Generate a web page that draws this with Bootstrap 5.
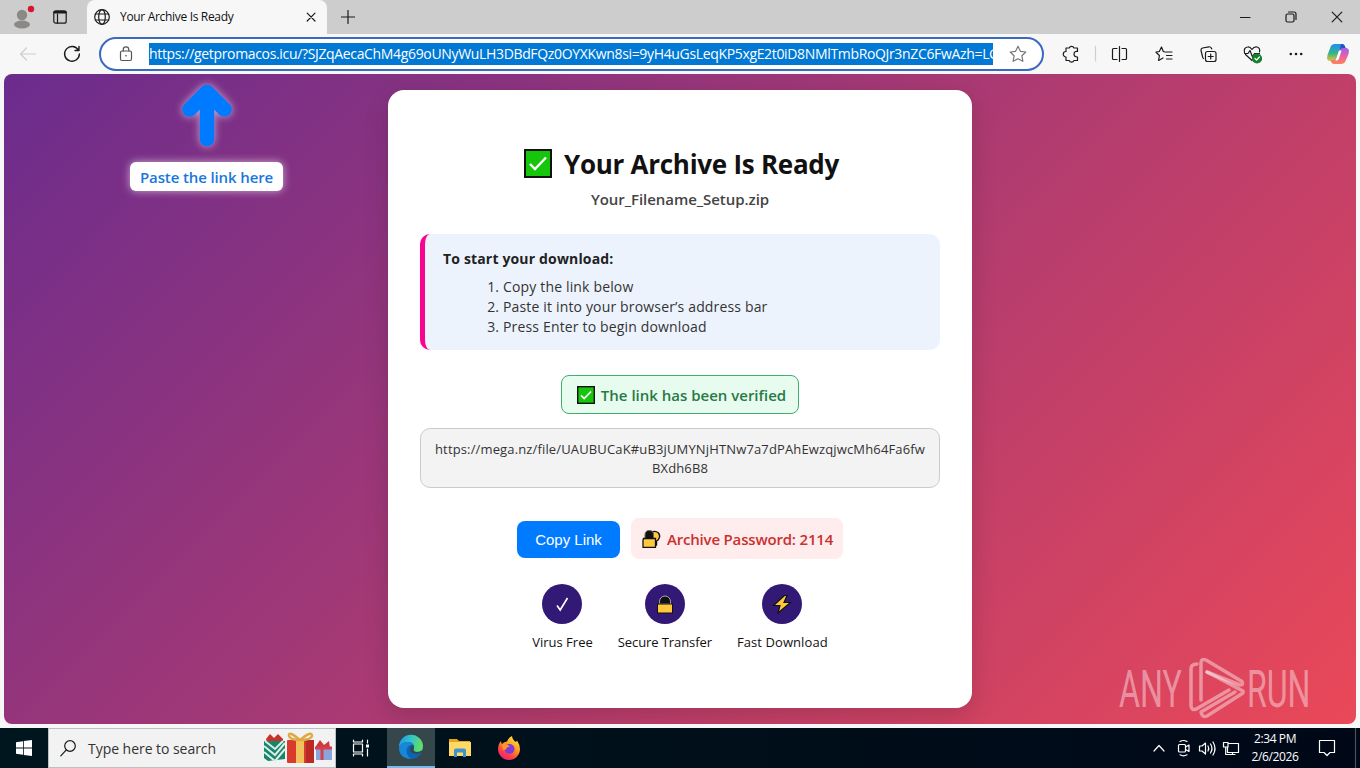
<!DOCTYPE html>
<html lang="en">
<head>
    <meta charset="UTF-8">
    <meta name="viewport" content="width=device-width, initial-scale=1.0">
    <title>Your Archive Is Ready</title>
    <link href="https://cdn.jsdelivr.net/npm/bootstrap@5.3.2/dist/css/bootstrap.min.css" rel="stylesheet">
    <style>
        body {
            width: 1360px;
            height: 768px;
            overflow: hidden;
            background: #f7f7f7;
            color: #111;
            font-family: "Open Sans", "Noto Sans", sans-serif;
        }
        svg { display: block; flex: none; }
        .ic { fill: none; stroke: #1b1b1b; stroke-width: 1.2; stroke-linecap: round; stroke-linejoin: round; }

        /* browser window */
        .tab-strip { height: 34px; background: #cdcdcd; }
        .strip-left { width: 87px; padding-left: 11px; gap: 18px; }
        .page-tab { width: 240px; background: #f7f7f7; border-radius: 8px 8px 0 0; padding: 0 9px 0 7px; }
        .tab-title { font-size: 12px; margin-left: 10px; letter-spacing: -.32px; }
        .new-tab { margin-left: 14px; }
        .win-buttons { gap: 34px; padding-right: 17px; }
        .tool-row { height: 40px; background: #f7f7f7; }
        .address { width: 945px; height: 34px; margin-left: 18px; border: 2px solid #3a69c0; border-radius: 17px; background: #fff; padding: 0 15px 0 18px; }
        .address-url { width: 844px; height: 22px; margin-left: 16px; overflow: hidden; white-space: nowrap; background: #0078d4; color: #fff; font-size: 14px; line-height: 22px; letter-spacing: -.34px; }
        .page-view { height: 650px; margin: 0 4px 4px; border-radius: 8px; overflow: hidden; background: linear-gradient(135deg, #6b2c8d, #ea4858); }

        /* hint over the page */
        .hint { left: 126px; top: 9px; width: 153px; }
        .hint svg { filter: drop-shadow(0 0 4px rgba(255,255,255,.6)); }
        .hint-label { height: 29px; width: 153px; margin-top: 15px; background: #fff; color: #1877dd; border-radius: 6px; font-size: 15px; font-weight: 600; line-height: 30px; letter-spacing: -.12px; box-shadow: 0 0 8px rgba(255,255,255,.6); }

        /* archive card */
        .ready { width: 584px; height: 618px; margin-top: 16px; padding: 52px 32px 0; border-radius: 16px; background: #fff; box-shadow: 0 8px 24px rgba(0,0,0,.15); }
        .ready-title { height: 43px; padding-left: 3px; font-size: 26px; font-weight: 700; line-height: 42px; letter-spacing: -.27px; gap: 12px; }
        .file-name { height: 24px; margin-top: 2px; font-size: 15px; font-weight: 600; line-height: 24px; letter-spacing: -.06px; color: #444; }
        .steps { height: 116px; margin-top: 23px; padding: 14px 18px; border-left: 5px solid #fb0391; border-radius: 10px; background: #edf3fd; font-size: 14px; line-height: 20px; letter-spacing: .16px; color: #333; }
        .steps strong { display: block; line-height: 22px; color: #222; }
        .steps ol { margin: 7px 0 0; padding-left: 60px; }
        .verified { width: 238px; height: 39px; margin: 25px auto 0; padding: 1px 0 0 3px; border: 1px solid #3fae6e; border-radius: 8px; background: #e8fbef; color: #267a45; font-size: 15px; font-weight: 600; gap: 6px; }
        .link-box { height: 60px; margin-top: 14px; padding: 11px 12px; border: 1px solid #ccc; border-radius: 10px; background: #f3f3f3; color: #333; font-size: 13px; line-height: 19px; letter-spacing: .143px; }
        .copy-btn { width: 103px; height: 37px; padding: 0; margin-top: 1px; border: 0; border-radius: 8px; background: #007bff; color: #fff; font: 15px "Liberation Sans", sans-serif; }
        .pass { width: 212px; height: 41px; padding-top: 1px; border-radius: 8px; background: #ffecec; color: #c9302f; font-size: 15px; font-weight: 600; letter-spacing: -.18px; gap: 6px; }
        .actions { margin-top: 30px; gap: 11px; }
        .perks { margin-top: 25px; gap: 25px; font-size: 13px; line-height: 20px; color: #111; }
        .disc { width: 40px; height: 40px; border-radius: 50%; background: #321975; margin-bottom: 8px; }
        .perk-tight { letter-spacing: -.09px; }
        .perk-wide { letter-spacing: .09px; }
        .watermark { left: 1112px; top: 582px; }

        /* taskbar */
        .taskbar { height: 40px; background: linear-gradient(90deg, #00161f, #000e19 60%, #000818); color: #fff; }
        .start { width: 48px; }
        .search { width: 288px; background: #f2f2f2; border: 1px solid #b9c1c3; color: #333; padding: 0 2px 0 11px; }
        .search-text { margin-left: 12px; font-size: 14px; letter-spacing: -.04px; }
        .task-app { width: 49px; }
        .task-view { width: 51px; padding-right: 2px; }
        .task-app.current { width: 48px; background: #36474c; border-bottom: 2px solid #76b9ed; }
        .clock { width: 66px; font-size: 12px; line-height: 18px; letter-spacing: -.39px; }
        .tray .ic { stroke: #fff; }
    </style>
</head>
<body>

<div class="tab-strip d-flex">
    <div class="strip-left d-flex align-items-center">
        <svg width="24" height="24" viewBox="0 0 24 24"><circle cx="11" cy="10" r="5.2" fill="#8c8885"/><ellipse cx="11" cy="19.5" rx="8" ry="4" fill="#8c8885"/><circle cx="20" cy="4" r="3.2" fill="#d8152c"/></svg>
        <svg class="ic" width="14" height="14" viewBox="0 0 14 14"><rect x=".8" y=".8" width="12.4" height="12.4" rx="2"/><path d="M1.5 2.3H12.5" stroke-width="2.4"/><path d="M4.5 4V13"/></svg>
    </div>
    <div class="page-tab d-flex align-items-center">
        <svg class="ic" width="16" height="16" viewBox="0 0 16 16"><circle cx="8" cy="8" r="7.3"/><ellipse cx="8" cy="8" rx="3.3" ry="7.3"/><path d="M1.4 5H14.6M1.4 11H14.6"/></svg>
        <span class="tab-title">Your Archive Is Ready</span>
        <svg class="ic ms-auto" width="14" height="14" viewBox="0 0 14 14"><path d="M3.2 3.2L11 11M11 3.2L3.2 11"/></svg>
    </div>
    <svg class="ic new-tab align-self-center" width="14" height="14" viewBox="0 0 14 14"><path d="M7 .5V13.5M.5 7H13.5"/></svg>
    <div class="win-buttons d-flex align-items-center ms-auto">
        <svg class="ic" width="11" height="12" viewBox="0 0 11 12"><path d="M.5 6.5H10"/></svg>
        <svg class="ic" width="12" height="12" viewBox="0 0 12 12"><rect x="1" y="3" width="8" height="8" rx="1.5"/><path d="M3.5 1H9Q11 1 11 3V8.5"/></svg>
        <svg class="ic" width="12" height="12" viewBox="0 0 12 12"><path d="M1.2 1.2L10.8 10.8M10.8 1.2L1.2 10.8"/></svg>
    </div>
</div>

<div class="tool-row d-flex align-items-center">
    <svg class="ic" width="81" height="20" viewBox="0 0 81 20"><path d="M35.5 10H20.5M26.5 4L20.5 10L26.5 16" stroke="#cecece"/><path d="M78.6 6.5A7.4 7.4 0 1 0 79.4 10M79 2.5V6.5H75" stroke-width="1.4"/></svg>
    <div class="address d-flex align-items-center">
        <svg class="ic" width="14" height="16" viewBox="0 0 14 16"><g stroke="#555"><rect x="1.5" y="5" width="11" height="9.5" rx="1.5"/><path d="M4.2 5V3.7A2.8 2.8 0 0 1 9.800 3.700V5"/></g><circle cx="7" cy="9.8" r=".8" fill="#444" stroke="none"/></svg>
        <div class="address-url">https://getpromacos.icu/?SJZqAecaChM4g69oUNyWuLH3DBdFQz0OYXKwn8si=9yH4uGsLeqKP5xgE2t0iD8NMlTmbRoQJr3nZC6FwAzh=LG</div>
        <svg class="ic ms-auto" width="18" height="18" viewBox="0 0 18 18"><path stroke="#777" d="M9 1.3L11.4 6.3L16.8 7L12.9 10.8L13.9 16.3L9 13.7L4.1 16.3L5.1 10.8L1.2 7L6.6 6.3Z"/></svg>
    </div>
    <svg class="ic" width="316" height="28" viewBox="1044 40 316 28">
        <path d="M1066 48H1069.2A2.6 2.6 0 0 1 1074 48H1077.5V51.5Q1074 51 1074 54T1077.5 57V60.5H1074A2.6 2.6 0 0 1 1069.2 60.5H1066V57A2.7 2.7 0 0 1 1066 51.5Z"/>
        <path d="M1095.5 46V61" stroke="#cfcfcf"/>
        <path d="M1117 48.5H1113.5Q1112.5 48.5 1112.5 49.5V58.5Q1112.5 59.5 1113.5 59.5H1117M1119.5 46.5V61.5M1122 48.5H1125.5Q1126.5 48.5 1126.5 49.5V58.5Q1126.5 59.5 1125.5 59.5H1122"/>
        <path d="M1165 52L1163.3 51.5L1161.5 47L1159.3 51.5L1156 52.2L1159.4 55.5L1158.6 60.5L1163 58M1166 52H1172M1166.500 55.5H1172M1166.500 59H1172"/>
        <rect x="1205.5" y="51.5" width="10.5" height="10" rx="2"/><path d="M1210.7 54V59M1208.2 56.5H1213.2M1203.5 58.5Q1202.7 58 1202.5 56.5L1201 50.5Q1200.8 48.5 1202.5 48L1209 46.8Q1211 46.5 1211.8 49"/>
        <path d="M1252 60.5L1245.5 54.5M1244.5 52.5Q1243.5 47.5 1247.5 47Q1250 46.5 1252 49.5Q1254 46.5 1257 47Q1260.5 48 1259.5 52M1244.5 53.5H1248L1250 50.5L1252.5 57L1254.5 53.5H1259.5"/>
        <circle cx="1257" cy="58.5" r="4.5" fill="#12802c" stroke="#12802c"/><path d="M1255 58.5L1256.6 60L1259.4 57" stroke="#fff"/>
        <g fill="#1b1b1b" stroke="none"><circle cx="1290.8" cy="54" r="1.3"/><circle cx="1296" cy="54" r="1.3"/><circle cx="1301.2" cy="54" r="1.3"/></g>
        <defs>
            <linearGradient id="cpA" x1="0" y1="0" x2="0" y2="1"><stop offset="0" stop-color="#1f8df0"/><stop offset=".55" stop-color="#35b58d"/><stop offset="1" stop-color="#e9c52e"/></linearGradient>
            <linearGradient id="cpB" x1="0" y1="0" x2="0" y2="1"><stop offset="0" stop-color="#9a61ef"/><stop offset=".55" stop-color="#ef5f9e"/><stop offset="1" stop-color="#fb8658"/></linearGradient>
        </defs>
        <g stroke="none">
            <path d="M1335 44H1342Q1344.5 44 1345.5 48L1346 50H1343Q1340.5 50 1339.5 53L1337.5 58.5Q1336.8 61 1334.5 61H1330Q1326 61 1327.5 55L1330.5 47Q1331.5 44 1335 44Z" fill="url(#cpA)"/>
            <path d="M1341 64H1334Q1331.5 64 1330.5 60H1334Q1336 60 1337 57L1339 50.5Q1340 48 1342 48H1346Q1350 48 1348.5 54L1345.5 61Q1344.5 64 1341 64Z" fill="url(#cpB)"/>
            <path d="M1339.5 51L1341 44H1342Q1344.500 44 1345.5 48H1342.5Q1340.5 48 1339.5 51Z" fill="#2453c9"/>
            <path d="M1336.3 58.5L1339 50.5H1341.5L1339 58.5Q1338.4 60 1337 60.500H1335Q1336 60 1336.3 58.5Z" fill="#fff"/>
        </g>
    </svg>
</div>

<main class="page-view position-relative d-flex justify-content-center align-items-start">
    <div class="hint position-absolute text-center">
        <svg class="mx-auto" width="56" height="64" viewBox="0 0 56 64"><path d="M28 56V14M10.500 26.500L28 9L45.500 26.500M24 18H32" fill="none" stroke="#007bff" stroke-width="14.500" stroke-linecap="round" stroke-linejoin="round"/></svg>
        <div class="hint-label">Paste the link here</div>
    </div>

    <div class="ready">
        <div class="ready-title d-flex justify-content-center align-items-center">
            <svg width="28" height="29" viewBox="0 0 28 29"><rect x="1" y="1" width="26" height="27" fill="#16c60c" stroke="#111" stroke-width="2"/><path d="M6 15L11 20L22 8.5" fill="none" stroke="#fff" stroke-width="2.400"/></svg>
            <span>Your Archive Is Ready</span>
        </div>
        <div class="file-name text-center">Your_Filename_Setup.zip</div>
        <div class="steps">
            <strong>To start your download:</strong>
            <ol>
                <li>Copy the link below</li>
                <li>Paste it into your browser’s address bar</li>
                <li>Press Enter to begin download</li>
            </ol>
        </div>
        <div class="verified d-flex justify-content-center align-items-center">
            <svg width="18" height="18" viewBox="0 0 18 18"><rect x=".7" y=".7" width="16.6" height="16.6" fill="#16c60c" stroke="#111" stroke-width="1.4"/><path d="M4 9.300L7.200 12.500L14 5.500" fill="none" stroke="#fff" stroke-width="1.7"/></svg>
            <span>The link has been verified</span>
        </div>
        <div class="link-box text-center">https://mega.nz/file/UAUBUCaK#uB3jUMYNjHTNw7a7dPAhEwzqjwcMh64Fa6fw<br>BXdh6B8</div>
        <div class="actions d-flex justify-content-center align-items-center">
            <button class="btn copy-btn" type="button">Copy Link</button>
            <div class="pass d-flex justify-content-center align-items-center">
                <svg width="20" height="20" viewBox="0 0 20 20"><path d="M10 3.500Q14 1 17.500 4Q20 7.500 17 11L15.500 12V16H10Z" fill="#ffc83d" stroke="#111" stroke-width="1.4"/><path d="M4 9.500V6Q4 1.500 8.300 1.500T12.500 6V9.500Z" fill="#111" stroke="#666"/><path d="M2.500 9.500H14.500V18.300H2V11Z" fill="#ffc83d" stroke="#111" stroke-width="1.300"/></svg>
                <span>Archive Password: 2114</span>
            </div>
        </div>
        <div class="perks d-flex justify-content-center">
            <div class="d-flex flex-column align-items-center">
                <div class="disc d-flex justify-content-center align-items-center"><svg width="16" height="18" viewBox="0 0 16 18"><path d="M3 10.500L6.200 15L13.500 3" fill="none" stroke="#fff" stroke-width="1.700"/></svg></div>
                <span>Virus Free</span>
            </div>
            <div class="d-flex flex-column align-items-center">
                <div class="disc d-flex justify-content-center align-items-center"><svg width="20" height="20" viewBox="0 0 20 20"><path d="M4.500 10V7.500A5.500 5.500 0 0 1 15.500 7.500V10Z" fill="#111" stroke="#aaa"/><rect x="2.500" y="10" width="15" height="9" fill="#ffc83d" stroke="#111"/></svg></div>
                <span class="perk-tight">Secure Transfer</span>
            </div>
            <div class="d-flex flex-column align-items-center">
                <div class="disc d-flex justify-content-center align-items-center"><svg width="20" height="20" viewBox="0 0 20 20"><path d="M12.500 1.500L1.500 11.500H8L6 19L18.500 8.500H12L15 1.500Z" fill="#ffc83d" stroke="#111" stroke-width="1.200"/></svg></div>
                <span class="perk-wide">Fast Download</span>
            </div>
        </div>
    </div>

    <svg class="watermark position-absolute" width="204" height="66" viewBox="0 0 204 66">
        <g fill="#fff" fill-opacity=".42" font-family="Roboto, sans-serif" font-size="51" font-weight="400">
            <text transform="translate(3 51) scale(.63 1)">ANY</text>
            <text transform="translate(131 51) scale(.63 1)">RUN</text>
        </g>
        <g fill="none" stroke="#fff" stroke-opacity=".42" stroke-width="3.500" stroke-linejoin="round" stroke-linecap="round">
            <path d="M85 44V7Q85 2 90 4L126 25.500Q128 29 124 29L91 16"/>
            <path d="M81 8Q75 8 75 13V50Q76 56 82 52L113 34"/>
            <path d="M91 16L127 35V37L91 60Q86 62 85 56L119 36"/>
        </g>
    </svg>
</main>

<footer class="taskbar d-flex">
    <div class="start d-flex align-items-center justify-content-center">
        <svg width="16" height="16" viewBox="0 0 16 16" fill="#fff"><path d="M0 2.3L7 1.2V7.6H0ZM7.8 1.1L16 0V7.6H7.800ZM0 8.4H7V14.8L0 13.7ZM7.8 8.4H16V16L7.8 14.9Z"/></svg>
    </div>
    <div class="search d-flex align-items-center">
        <svg class="ic" width="16" height="17" viewBox="0 0 16 17"><circle cx="10" cy="6" r="5.3"/><path d="M6.300 9.900L.8 15.800"/></svg>
        <span class="search-text">Type here to search</span>
        <svg class="ms-auto" width="69" height="36" viewBox="0 0 69 36">
            <path d="M2 9L6 4L10 8L14 4L19 9V13H3Z" fill="#c9322a"/>
            <path d="M0 11H21V29L4 31L0 28Z" fill="#17846c"/>
            <path d="M0 16L11 25L21 13M0 22L11 31L21 19M1 11L11 19L19 11" fill="none" stroke="#d9eee4" stroke-width="2"/>
            <rect x="23" y="10" width="27" height="23" rx="1" fill="#d93a2e"/><rect x="42" y="10" width="8" height="23" fill="#b92a25"/>
            <path d="M32 10H40V33H32Z" fill="#f1c15c"/><path d="M36 10Q24 0 25 6Q26 10 36 10Q48 0 48 6Q47 10 36 10" fill="none" stroke="#dfa944" stroke-width="2.5"/>
            <path d="M52 16L56 10L60 15L65 11L66 18H52Z" fill="#cf3a39"/>
            <rect x="52" y="18" width="16" height="12" fill="#8aa5dc"/><path d="M58 17V30M51 18H68" stroke="#d43f4c" stroke-width="3"/>
        </svg>
    </div>
    <div class="task-view d-flex align-items-center justify-content-center">
        <svg class="ic" width="18" height="18" viewBox="0 0 18 18"><g stroke="#fff"><rect x="1.5" y="5" width="9" height="8"/><path d="M1.5 1V3H10.5V1M1.5 17V15H10.5V17M15.5 1V4M15.5 10V17"/></g><rect x="14" y="5.500" width="3" height="3" fill="#fff" stroke="none"/></svg>
    </div>
    <div class="task-app current d-flex align-items-center justify-content-center">
        <svg width="26" height="26" viewBox="0 0 26 26">
            <defs>
                <linearGradient id="edA" x1="0" y1=".3" x2="1" y2=".5"><stop offset="0" stop-color="#1d9be4"/><stop offset=".5" stop-color="#36c5c4"/><stop offset="1" stop-color="#66e05a"/></linearGradient>
            </defs>
            <circle cx="13" cy="13" r="12" fill="#0c64b5"/>
            <path d="M1 13A12 12 0 0 1 25 12.5Q25 18 19 18Q15.5 18 15.500 15.5Q17.5 9 11 8Q4 7.5 1 13Z" fill="url(#edA)"/>
            <path d="M1 13Q4 7.5 11 8Q14 8.5 15 10.5Q9 11 8.5 16Q8.5 22 13 25Q1 24.5 1 13Z" fill="#1987d8"/>
            <path d="M15 11Q11 13.5 12.5 17Q15 21.5 23.5 18.5L25 16Q22 18 19 18Q15.5 18 15.5 15.5Q16.5 13 15 11Z" fill="#36474c"/>
        </svg>
    </div>
    <div class="task-app d-flex align-items-center justify-content-center">
        <svg width="24" height="20" viewBox="0 0 24 20"><path d="M1 1H9L11 3H22V7H1Z" fill="#e5a51c"/><rect x="1" y="4" width="22" height="14" fill="#ffd866"/><path d="M6 19V12Q6 10.5 8 10.5H16Q18 10.5 18 12V19H15V14.5H9V19Z" fill="#3c93d2"/></svg>
    </div>
    <div class="task-app d-flex align-items-center justify-content-center">
        <svg width="24" height="25" viewBox="0 0 24 25">
            <defs><linearGradient id="ffA" x1=".8" y1="0" x2=".2" y2="1"><stop offset="0" stop-color="#fff04b"/><stop offset=".4" stop-color="#ff9a1f"/><stop offset=".75" stop-color="#ff3b49"/><stop offset="1" stop-color="#e61d87"/></linearGradient></defs>
            <path d="M12 24A11 11 0 0 1 1 13Q1 9 3.500 5L5 8Q7 5.500 10 5.500Q11 2 15 0Q15.500 4 19 6L20 4.500Q23 9 23 13A11 11 0 0 1 12 24Z" fill="url(#ffA)"/>
            <circle cx="12.500" cy="13" r="5" fill="#8338d8"/><path d="M5 8Q9 7 13 10.500Q9 11 9 13.500L6 14Z" fill="#ff9a1f"/>
        </svg>
    </div>
    <div class="tray d-flex align-items-center ms-auto">
        <svg class="ic" width="90" height="24" viewBox="1152 736 90 24">
            <path d="M1154 751L1159 745.5L1164 751"/>
            <rect x="1178.5" y="744.5" width="7" height="7.5" rx="1"/><path d="M1185.5 747L1189 745V751.5L1185.5 749.5M1180 741.5Q1183.5 739.5 1187 741.5M1180 754.8Q1183.5 756.8 1187 754.8"/>
            <path d="M1199.5 746V751H1202L1205.5 754V743L1202 746ZM1208 746Q1209.5 748.5 1208 751M1210.5 744Q1213.5 748.5 1210.5 753M1213 742Q1217 748.5 1213 755"/>
            <path d="M1228 743.5H1238.5V752.5H1227.5V747M1223.5 742.5H1228V747H1223.5ZM1225.7 747V754.5H1235M1232.5 752.5V754.5"/>
        </svg>
        <div class="clock text-center">2:34 PM<br>2/6/2026</div>
        <svg class="ic" width="52" height="40" viewBox="1308 728 52 40"><path d="M1319.5 740.5H1334.5V752.5H1330L1327 755.5L1324 752.5H1319.5Z"/><path d="M1355.5 728V768" stroke="#4a525b"/></svg>
    </div>
</footer>
<script src="https://cdn.jsdelivr.net/npm/bootstrap@5.3.2/dist/js/bootstrap.bundle.min.js"></script>
</body>
</html>
